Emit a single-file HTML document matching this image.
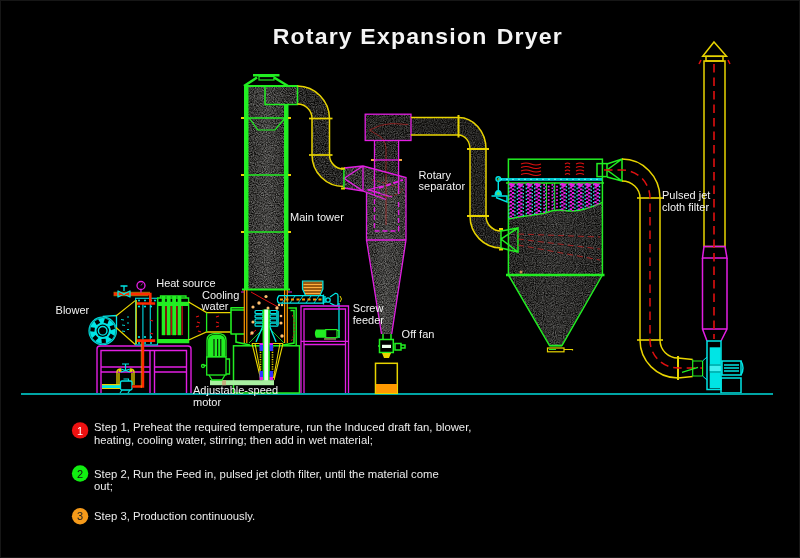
<!DOCTYPE html>
<html><head><meta charset="utf-8">
<style>
html,body{margin:0;padding:0;background:#000;}
body{width:800px;height:558px;overflow:hidden;position:relative;}
svg{position:absolute;left:0;top:0;will-change:transform;}
text{font-family:"Liberation Sans",sans-serif;}
</style></head><body>
<svg width="800" height="558" viewBox="0 0 800 558">
<defs>
<filter id="tex" x="0" y="0" width="800" height="558" filterUnits="userSpaceOnUse" color-interpolation-filters="sRGB">
<feTurbulence type="fractalNoise" baseFrequency="0.9" numOctaves="2" seed="7" result="n"/>
<feColorMatrix in="n" type="matrix" values="0.75 0 0 0 -0.175  0.75 0 0 0 -0.178  0.75 0 0 0 -0.185  0 0 0 0 1" result="g"/>
<feComposite in="g" in2="SourceAlpha" operator="in"/>
</filter>
<filter id="texd" x="0" y="0" width="800" height="558" filterUnits="userSpaceOnUse" color-interpolation-filters="sRGB">
<feTurbulence type="fractalNoise" baseFrequency="0.9" numOctaves="2" seed="11" result="n"/>
<feColorMatrix in="n" type="matrix" values="0.6 0 0 0 -0.148  0.6 0 0 0 -0.15  0.6 0 0 0 -0.156  0 0 0 0 1" result="g"/>
<feComposite in="g" in2="SourceAlpha" operator="in"/>
</filter>
<filter id="texd2" x="0" y="0" width="800" height="558" filterUnits="userSpaceOnUse" color-interpolation-filters="sRGB">
<feTurbulence type="fractalNoise" baseFrequency="0.9" numOctaves="2" seed="13" result="n"/>
<feColorMatrix in="n" type="matrix" values="0.5 0 0 0 -0.115  0.5 0 0 0 -0.118  0.5 0 0 0 -0.125  0 0 0 0 1" result="g"/>
<feComposite in="g" in2="SourceAlpha" operator="in"/>
</filter>
<linearGradient id="streak" x1="0" y1="0" x2="1" y2="0">
<stop offset="0" stop-color="#fff" stop-opacity="0"/><stop offset="0.5" stop-color="#fff" stop-opacity="0.09"/><stop offset="1" stop-color="#fff" stop-opacity="0"/>
</linearGradient>
</defs>
<rect width="800" height="558" fill="#000"/>
<rect x="0.5" y="0.5" width="799" height="557" fill="none" stroke="#161616" stroke-width="1"/>

<!-- ===== textured fills ===== -->
<g filter="url(#tex)" fill="#fff">
 <!-- tower -->
 <rect x="248" y="86" width="37" height="204"/>
 <rect x="265" y="86" width="33" height="18"/>
 <!-- cyclone -->
 <path d="M344,168 L363,166 L406,177.5 L406,240 L366.5,240 L366.5,192 L344,188 Z"/>
 <path d="M366.5,240 L406,240 L391.7,334 L381.5,334 Z"/>
 </g>
<g filter="url(#texd)" fill="#fff">
 <rect x="365" y="114.2" width="46" height="26.3"/>
 <rect x="374" y="140" width="25" height="40"/>
 <!-- duct 1 -->
 <path d="M297,86 A32.5,32.5 0 0 1 329.5,118.5 L329.5,155 A14,14 0 0 0 343.5,169 L343.5,186.5 A31.5,31.5 0 0 1 312,155 L312,118.5 A14.5,14.5 0 0 0 297.5,104 Z"/>

 <path d="M508.4,219 C520,216 535,215 545,213 C552,210 557,209 565,210.4 C572,211.5 578,211 585,209 C592,207 597,205 602.4,202.4 L602.4,275 L562,345.6 L549.5,345.6 L508.4,275 Z"/>
</g>

<g fill="url(#streak)">
 <rect x="248" y="86" width="37" height="204"/>
 <path d="M366.5,240 L406,240 L391.7,334 L381.5,334 Z"/>
 <rect x="366.5" y="177" width="39.5" height="63"/>
 <path d="M508.4,219 C520,216 535,215 545,213 C552,210 557,209 565,210.4 C572,211.5 578,211 585,209 C592,207 597,205 602.4,202.4 L602.4,275 L562,345.6 L549.5,345.6 L508.4,275 Z" opacity="0.6"/>
</g>
<g filter="url(#texd2)" fill="#fff">
 <!-- duct 2 -->
 <path d="M411,117.4 L458.5,117.4 A27.5,31.6 0 0 1 486,149 L486,216 A15,15 0 0 0 501,231 L501,248 A31,32 0 0 1 470,216 L470,149 A11.6,14 0 0 0 458.5,135 L411,135 Z"/>
</g>
<!-- ===== main tower (green) ===== -->
<g stroke="#22ee22" fill="none" stroke-width="1.5">
 <rect x="244" y="86" width="4.5" height="204" fill="#22ee22" stroke="none"/>
 <rect x="284" y="104" width="4.5" height="186" fill="#22ee22" stroke="none"/>
 <line x1="244" y1="86" x2="298" y2="86" stroke-width="2"/>
 <rect x="265" y="86" width="32.5" height="18.5"/>
 <path d="M244,86 L257,77.5 M288,86 L274,77.5" stroke-width="2.5"/>
 <rect x="253" y="74" width="26.5" height="2.5" fill="#22ee22" stroke="none"/>
 <rect x="259" y="76.5" width="15" height="3.5" stroke-width="1.2"/>
 <line x1="242" y1="118" x2="290" y2="118"/>
 <path d="M249,118 L258,130 L275,130 L285,118" stroke-width="1.2"/>
 <line x1="242" y1="175" x2="290" y2="175"/>
 <line x1="242" y1="232" x2="290" y2="232"/>
 <line x1="242" y1="289.5" x2="290" y2="289.5" stroke-width="2"/>
</g>
<g fill="#e8d400"><rect x="241" y="117" width="3" height="2"/><rect x="288" y="117" width="3" height="2"/>
<rect x="241" y="174" width="3" height="2"/><rect x="288" y="174" width="3" height="2"/>
<rect x="241" y="231" width="3" height="2"/><rect x="288" y="231" width="3" height="2"/></g>

<!-- ===== duct 1 (yellow) ===== -->
<g stroke="#e8d400" fill="none" stroke-width="1.5">
 <path d="M297.5,86 A32.5,32.5 0 0 1 329.5,118.5 L329.5,155 A14,14 0 0 0 343.5,169"/>
 <path d="M297.5,104 A14.5,14.5 0 0 1 312,118.5 L312,155 A31.5,31.5 0 0 0 343.5,186.5"/>
 <line x1="309" y1="118.5" x2="332.5" y2="118.5" stroke-width="1.7"/>
 <line x1="309" y1="155" x2="332.5" y2="155" stroke-width="1.7"/>
</g>

<!-- ===== cyclone (magenta) ===== -->
<g stroke="#c02020" fill="none" stroke-width="0.8" opacity="0.8">
 <path d="M408,124.5 L392,123.5 Q380,124 369.5,130 L381,137 Q386,142 386,150 V225" /><path d="M372,180 Q395,185 403,190 Q396,198 378,196" stroke-dasharray="3,2"/>
</g>
<g stroke="#e21ee2" fill="none" stroke-width="1.3">
 <rect x="365.2" y="114.2" width="45.8" height="26.3" stroke-width="1.3"/>
 <line x1="374.5" y1="140" x2="374.5" y2="196"/>
 <line x1="398.6" y1="140" x2="398.6" y2="194"/>
 <line x1="372" y1="160" x2="401" y2="160"/>
 <path d="M344,168 L363,166 L406,177.5 L406,240 M363,166 L344,178.4 L363,191 L344,188 M363,166 L363,191 L386,199.5 M366.5,192 L366.5,240 L406,240"/>
 <path d="M379,188 L403,180" stroke-dasharray="5,2.5" stroke-width="2"/>
 <path d="M382,186 L368,190 L380,193 M378,193 L392,197"/>
 <path d="M374.5,199 L374.5,231 L398.6,231 L398.6,199" stroke-dasharray="5,3"/>
 <path d="M366.5,240 L381.5,334 M406,240 L391.7,334"/>
</g>
<g fill="#f0a040"><rect x="371" y="159" width="3" height="2"/><rect x="399" y="159" width="3" height="2"/></g>
<line x1="343.9" y1="168" x2="343.9" y2="188.7" stroke="#22ee22" stroke-width="1.5"/>
<g fill="#e8d400"><rect x="341" y="167.5" width="4" height="2"/><rect x="341" y="187.5" width="4" height="2"/></g>

<!-- ===== duct 2 (yellow) ===== -->
<g stroke="#e8d400" fill="none" stroke-width="1.5">
 <path d="M411,117.4 L458.5,117.4 A27.5,31.6 0 0 1 486,149 L486,216 A15,15 0 0 0 501,231"/>
 <path d="M411,135 L458.5,135 A11.6,14 0 0 1 470,149 L470,216 A31,32 0 0 0 501,248"/>
 <line x1="458.5" y1="115" x2="458.5" y2="137.5" stroke-width="2"/>
 <line x1="467" y1="149" x2="489" y2="149" stroke-width="2"/>
 <line x1="467" y1="216" x2="489" y2="216" stroke-width="2"/>
</g>

<!-- ===== filter (green) ===== -->
<g stroke="#22ee22" fill="none" stroke-width="1.5">
 <rect x="508.4" y="159.2" width="94" height="116"/>
 <line x1="506" y1="183" x2="604" y2="183"/>
 <line x1="506" y1="275" x2="604.5" y2="275" stroke-width="2.5"/>
 <path d="M508.4,275 L549.5,345.6 L562,345.6 L602.4,275"/>
 <path d="M501,229 V250 M501,231 L518,228 L518,252 L501,248 M518,228 L501,239 L518,252"/>
 <path d="M508.4,219 C520,216 535,215 545,213 C552,210 557,209 565,210.4 C572,211.5 578,211 585,209 C592,207 597,205 602.4,202.4"/>
 <rect x="597" y="163.6" width="10" height="13"/>
 <path d="M607,164 L622,159 L622,181 L607,177 M622,159 L607,170 L622,181"/>
</g>
<rect x="498" y="178" width="104" height="2.8" fill="#00c8d0"/><line x1="500" y1="179.4" x2="602" y2="179.4" stroke="#60f0f0" stroke-width="1.2" stroke-dasharray="2,4"/>
<!-- bags -->
<clipPath id="bagclip"><path d="M508.4,183 H602.4 V202.4 C597,205 592,207 585,209 C578,211 572,211.5 565,210.4 C557,209 552,210 545,213 C535,215 520,216 508.4,219 Z"/></clipPath>
<g clip-path="url(#bagclip)">
<path d="M510.79999999999995,183 V222" stroke="#e21ee2" stroke-width="2.4" stroke-dasharray="1.9,1.7"/><path d="M513.0,184.8 V222" stroke="#e21ee2" stroke-width="2.4" stroke-dasharray="1.9,1.7"/><path d="M508.9,184 V222 M514.9,185.8 V222" stroke="#30d8e0" stroke-width="1.4" stroke-dasharray="1.6,2"/>
<path d="M507.9,183.5 H515.9 L511.9,187.5 Z" fill="#e21ee2"/><path d="M519.1999999999999,183 V222" stroke="#e21ee2" stroke-width="2.4" stroke-dasharray="1.9,1.7"/><path d="M521.4,184.8 V222" stroke="#e21ee2" stroke-width="2.4" stroke-dasharray="1.9,1.7"/><path d="M517.3,184 V222 M523.3,185.8 V222" stroke="#30d8e0" stroke-width="1.4" stroke-dasharray="1.6,2"/>
<path d="M516.3,183.5 H524.3 L520.3,187.5 Z" fill="#e21ee2"/><path d="M528.1999999999999,183 V222" stroke="#e21ee2" stroke-width="2.4" stroke-dasharray="1.9,1.7"/><path d="M530.4,184.8 V222" stroke="#e21ee2" stroke-width="2.4" stroke-dasharray="1.9,1.7"/><path d="M526.3,184 V222 M532.3,185.8 V222" stroke="#30d8e0" stroke-width="1.4" stroke-dasharray="1.6,2"/>
<path d="M525.3,183.5 H533.3 L529.3,187.5 Z" fill="#e21ee2"/><path d="M536.6,183 V222" stroke="#e21ee2" stroke-width="2.4" stroke-dasharray="1.9,1.7"/><path d="M538.8000000000001,184.8 V222" stroke="#e21ee2" stroke-width="2.4" stroke-dasharray="1.9,1.7"/><path d="M534.7,184 V222 M540.7,185.8 V222" stroke="#30d8e0" stroke-width="1.4" stroke-dasharray="1.6,2"/>
<path d="M533.7,183.5 H541.7 L537.7,187.5 Z" fill="#e21ee2"/><path d="M562.3,183 V222" stroke="#e21ee2" stroke-width="2.4" stroke-dasharray="1.9,1.7"/><path d="M564.5,184.8 V222" stroke="#e21ee2" stroke-width="2.4" stroke-dasharray="1.9,1.7"/><path d="M560.4,184 V222 M566.4,185.8 V222" stroke="#30d8e0" stroke-width="1.4" stroke-dasharray="1.6,2"/>
<path d="M559.4,183.5 H567.4 L563.4,187.5 Z" fill="#e21ee2"/><path d="M570.8,183 V222" stroke="#e21ee2" stroke-width="2.4" stroke-dasharray="1.9,1.7"/><path d="M573.0,184.8 V222" stroke="#e21ee2" stroke-width="2.4" stroke-dasharray="1.9,1.7"/><path d="M568.9,184 V222 M574.9,185.8 V222" stroke="#30d8e0" stroke-width="1.4" stroke-dasharray="1.6,2"/>
<path d="M567.9,183.5 H575.9 L571.9,187.5 Z" fill="#e21ee2"/><path d="M579.0,183 V222" stroke="#e21ee2" stroke-width="2.4" stroke-dasharray="1.9,1.7"/><path d="M581.2,184.8 V222" stroke="#e21ee2" stroke-width="2.4" stroke-dasharray="1.9,1.7"/><path d="M577.1,184 V222 M583.1,185.8 V222" stroke="#30d8e0" stroke-width="1.4" stroke-dasharray="1.6,2"/>
<path d="M576.1,183.5 H584.1 L580.1,187.5 Z" fill="#e21ee2"/><path d="M587.1,183 V222" stroke="#e21ee2" stroke-width="2.4" stroke-dasharray="1.9,1.7"/><path d="M589.3000000000001,184.8 V222" stroke="#e21ee2" stroke-width="2.4" stroke-dasharray="1.9,1.7"/><path d="M585.2,184 V222 M591.2,185.8 V222" stroke="#30d8e0" stroke-width="1.4" stroke-dasharray="1.6,2"/>
<path d="M584.2,183.5 H592.2 L588.2,187.5 Z" fill="#e21ee2"/><path d="M595.5,183 V222" stroke="#e21ee2" stroke-width="2.4" stroke-dasharray="1.9,1.7"/><path d="M597.7,184.8 V222" stroke="#e21ee2" stroke-width="2.4" stroke-dasharray="1.9,1.7"/><path d="M593.6,184 V222 M599.6,185.8 V222" stroke="#30d8e0" stroke-width="1.4" stroke-dasharray="1.6,2"/>
<path d="M592.6,183.5 H600.6 L596.6,187.5 Z" fill="#e21ee2"/><path d="M546.4,178 V222" stroke="#40e040" stroke-width="1"/><path d="M544.1,184 V222 M548.6999999999999,185.7 V222" stroke="#e21ee2" stroke-width="1.8" stroke-dasharray="1.7,1.7"/><path d="M545.4,186 V222" stroke="#30d8e0" stroke-width="0.9" stroke-dasharray="1.5,2"/>
<path d="M554.7,178 V222" stroke="#40e040" stroke-width="1"/><path d="M552.4000000000001,184 V222 M557.0,185.7 V222" stroke="#e21ee2" stroke-width="1.8" stroke-dasharray="1.7,1.7"/><path d="M553.7,186 V222" stroke="#30d8e0" stroke-width="0.9" stroke-dasharray="1.5,2"/>
</g>
<!-- red squiggles -->
<g stroke="#e01010" fill="none" stroke-width="1.2">
 <path d="M521,164 q5,-2 10,0 t10,0 M521,167.5 q5,-2 10,0 t10,0 M521,171 q5,-2 10,0 t10,0 M521,174.5 q5,-2 10,0 t10,0"/>
 <path d="M565,164 q2.5,-2 5,0 M565,167.5 q2.5,-2 5,0 M565,171 q2.5,-2 5,0 M565,174.5 q2.5,-2 5,0 M576,164 q4,-2 8,0 M576,167.5 q4,-2 8,0 M576,171 q4,-2 8,0 M576,174.5 q4,-2 8,0"/>
</g>
<g stroke="#b02020" fill="none" stroke-width="0.9" stroke-dasharray="6,4">
 <path d="M518,234 L600,237 M518,239 L600,249 M518,245 L600,260"/>
</g>
<circle cx="521" cy="272" r="1.5" fill="#d09050"/>
<g fill="#e8d400"><rect x="499" y="228" width="4" height="2"/><rect x="499" y="248.5" width="4" height="2"/></g>
<!-- filter valve -->
<g stroke="#e8d400" fill="none" stroke-width="1.2"><rect x="547.5" y="348" width="16.5" height="3.8"/><path d="M564,349.5 H572.5 V350.5"/></g><path d="M549.5,346 H562 M549,349.5 H556" stroke="#22ee22" stroke-width="1.2"/>
<!-- filter left bracket -->
<g stroke="#00e5e5" fill="none" stroke-width="1.4"><circle cx="498.3" cy="179" r="2.3"/><path d="M498.3,181 V191 M491.5,196 H507 V202 L496,197.5"/></g>
<path d="M494.5,195.5 Q494.5,190 498.3,190 Q502,190 502,195.5 Z" fill="#00e5e5"/>
<circle cx="498.3" cy="193.5" r="1.5" fill="#60e060"/>
<circle cx="498.3" cy="179.3" r="1" fill="#60c040"/>

<!-- ===== duct 3 (yellow) ===== -->
<g stroke="#e8d400" fill="none" stroke-width="1.5">
 <path d="M622,159 A38,39 0 0 1 660,198 L660,340 A18,18 0 0 0 678,358 L692.7,359.5"/>
 <path d="M622,181 A18,17 0 0 1 640,198 L640,340 A38,38 0 0 0 678,378 L692.7,376.5"/>
 <line x1="637" y1="198" x2="663" y2="198" stroke-width="1.6"/>
 <line x1="637" y1="340" x2="663" y2="340" stroke-width="1.6"/>
 <line x1="678" y1="356" x2="678" y2="380" stroke-width="2"/>
</g>
<g stroke="#e01010" fill="none" stroke-width="1.5" stroke-dasharray="8.5,5">
 <path d="M604,170 L622,170 A28,28 0 0 1 650,198 L650,340 A28,28 0 0 0 678,368 L703,368"/>
</g>
<g stroke="#22ee22" fill="none" stroke-width="1.2">
 <path d="M692.7,359.5 V376.5 M702.6,361 V376 M692.7,361 H702.6 M692.7,376 H702.6 M682,372.4 L698,367.4"/>
</g>

<!-- ===== chimney ===== -->
<g stroke="#e8d400" fill="none" stroke-width="1.5">
 <path d="M714,42 L726.5,56.3 L702.7,56.3 Z"/>
 <rect x="706" y="56.3" width="17" height="4.7"/>
 <rect x="704" y="61" width="21" height="185.5"/>
</g>
<g stroke="#e21ee2" fill="none" stroke-width="1.5">
 <path d="M704,246.5 L725,246.5 L727,258 L702.5,258 Z"/>
 <path d="M702.5,258 L702.5,329 L707,341 M727,258 L727,329 L721,341 M702.5,329 L727,329"/>
</g>
<line x1="714" y1="64" x2="714" y2="339" stroke="#e01010" stroke-width="1.6" stroke-dasharray="8.5,5"/>
<g stroke="#e01010" stroke-width="1.5"><path d="M699,64 L701,60 M730,64 L728,60"/></g>
<!-- fan -->
<g stroke="#00e5e5" fill="none" stroke-width="1.5">
 <rect x="707" y="341" width="14" height="48.5"/><path d="M702.6,361 L707,357 M702.6,376 L707,380" stroke-width="1"/>
 <rect x="722" y="361" width="19" height="14"/>
 <path d="M741,361 q4,7 0,14"/>
 <rect x="721" y="378" width="20" height="15"/>
</g>
<rect x="709.7" y="347.3" width="11" height="41" fill="#00e5e5"/><path d="M709.7,365 H720.5 M709.7,372 H720.5" stroke="#008c8c" stroke-width="1.2"/><rect x="709.7" y="366" width="11" height="5" fill="#40f0f0"/>
<g stroke="#00e5e5" stroke-width="1.5"><path d="M724,365 H739 M724,368 H739 M724,371 H739"/></g>

<!-- ===== ground ===== -->
<rect x="21" y="393" width="752" height="2" fill="#00a5a5"/>

<!-- ===== left equipment ===== -->
<!-- stand -->
<g stroke="#e21ee2" fill="none" stroke-width="1.4">
 <path d="M97,393 V349 Q97,346 100,346 H188 Q191,346 191,349 V393"/>
 <path d="M101,393 V350.5 H186.5 V393 M150,393 V350.5 M154.5,393 V350.5 M101,367 H150 M101,372 H150 M154.5,367 H186.5 M154.5,372 H186.5"/>
</g>
<!-- bottom pump/valve -->
<g stroke="#e8d400" fill="none" stroke-width="1.3">
 <path d="M117,385 V372 Q117,369 121,369 M134,385 V372 Q134,369 130,369 M119,385 V373 M132,385 V373"/>
</g>
<g fill="#e8d400"><circle cx="120" cy="370.5" r="1.6"/><circle cx="131" cy="370.5" r="1.6"/></g>
<g stroke="#00e5e5" fill="none" stroke-width="1.2">
 <path d="M125.5,364 V371 M122,364 H129 M121,369 L130,372 M121,372 L130,369"/>
</g>
<rect x="102" y="385" width="19" height="3" fill="#00e5e5"/>
<rect x="102" y="384" width="19" height="1.2" fill="#e8d400"/>
<rect x="102" y="388" width="19" height="1" fill="#e8d400"/>
<rect x="120.5" y="381" width="11.5" height="9" rx="1.5" fill="#000" stroke="#00e5e5" stroke-width="1.3"/>
<path d="M122,390 L120,393 M130,390 L128,393 M123.5,379 H128.5 V381" stroke="#00e5e5" stroke-width="1.1" fill="none"/>
<!-- blower -->
<path d="M102.7,316.3 L116.5,315.5 L116.5,328" stroke="#00e5e5" fill="none" stroke-width="1.3"/>
<circle cx="102.7" cy="330.8" r="14.3" fill="#00e5e5"/>
<circle cx="102.7" cy="330.8" r="13.2" fill="none" stroke="#007878" stroke-width="0.7"/>
<rect x="104.09" y="319.12" width="4.2" height="4.2" fill="#000" transform="rotate(-70.0 106.19 321.22)"/><rect x="110.27" y="325.45" width="4.2" height="4.2" fill="#000" transform="rotate(-18.6 112.37 327.55)"/><rect x="109.17" y="334.23" width="4.2" height="4.2" fill="#000" transform="rotate(32.9 111.27 336.33)"/><rect x="101.62" y="338.85" width="4.2" height="4.2" fill="#000" transform="rotate(84.3 103.72 340.95)"/><rect x="93.30" y="335.82" width="4.2" height="4.2" fill="#000" transform="rotate(135.7 95.40 337.92)"/><rect x="90.48" y="327.43" width="4.2" height="4.2" fill="#000" transform="rotate(187.1 92.58 329.53)"/><rect x="95.28" y="320.00" width="4.2" height="4.2" fill="#000" transform="rotate(238.6 97.38 322.10)"/>
<circle cx="102.7" cy="330.8" r="6.2" fill="#000"/>
<circle cx="102.7" cy="330.8" r="4.3" fill="none" stroke="#00e5e5" stroke-width="1.4"/>
<g stroke="#e8d400" stroke-width="1.2" fill="none"><path d="M116,316 L135.2,300.6 M116,327.5 L135.2,344.5"/></g>
<g stroke="#00d0d0" stroke-width="1" fill="none"><path d="M121,319.5 l3,0.5 M127,317 l2,0 M122,325 l3,0.5 M127,323 l2,0 M122,331 l3,0.5 M127,329.5 l2,0"/></g>
<!-- heater -->
<g stroke="#00c8d0" fill="none" stroke-width="1.2">
 <rect x="135.6" y="298.3" width="21.9" height="46.6"/>
 <path d="M142.9,304 V340 M150.3,304 V340"/>
</g>
<path d="M136.2,300 V344" stroke="#e8d400" stroke-width="1.3"/>
<g fill="#00e5e5">
 <circle cx="139" cy="300.5" r="1"/><circle cx="145" cy="300.5" r="1"/><circle cx="151" cy="300.5" r="1"/><circle cx="155" cy="300.5" r="1"/>
 <circle cx="139" cy="306.5" r="1.1"/><circle cx="145" cy="306.5" r="1.1"/><circle cx="151" cy="306.5" r="1.1"/>
 <circle cx="139" cy="337" r="1.1"/><circle cx="145" cy="337" r="1.1"/><circle cx="151" cy="337" r="1.1"/>
 <circle cx="139" cy="343" r="1"/><circle cx="145" cy="343" r="1"/><circle cx="151" cy="343" r="1"/>
</g>
<g stroke="#ff2a00" fill="none" stroke-width="2.6">
 <path d="M113.6,294 H150.3 V303"/>
 <path d="M137,303.5 H155.2 M137,340.6 H155.2 M142.9,340.6 V386.5 H132"/>
</g>
<g stroke="#ffa000" stroke-width="0.7" fill="none"><path d="M113.6,292.3 H150 M113.6,295.7 H148.5 M141.3,342 V388"/></g>
<circle cx="141" cy="285.5" r="4" stroke="#e21ee2" fill="none" stroke-width="1.3"/>
<path d="M141,285.5 l1.5,-2" stroke="#e21ee2" stroke-width="0.8"/>
<line x1="141" y1="289.5" x2="141" y2="292.5" stroke="#e21ee2" stroke-width="1.2"/>
<g stroke="#00e5e5" stroke-width="1.3" fill="none"><path d="M124,286 V291 M120.5,286 H127.5 M118,290.5 V297.5 M130,290.5 V297.5 M118,291 L130,297 M118,297 L130,291"/></g>
<!-- heat exchanger -->
<g stroke="#22ee22" fill="none" stroke-width="1.3">
 <path d="M157.7,298 V342.7 H188.6 V298 Z"/>
 <path d="M160.5,298 V296 H186 V298"/>
</g>
<rect x="158" y="301.8" width="30.5" height="4.2" fill="#22ee22"/>
<rect x="158" y="339" width="30.5" height="3" fill="#22ee22"/>
<g fill="#22ee22"><rect x="161.7" y="296" width="3.5" height="39.2"/><rect x="166.8" y="296" width="3.8" height="39.2"/><rect x="172.2" y="296" width="3.8" height="39.2"/><rect x="177.6" y="296" width="3.7" height="39.2"/></g>
<g fill="#b01010"><rect x="165.3" y="306" width="1.4" height="29"/><rect x="170.7" y="306" width="1.4" height="29"/><rect x="176.1" y="306" width="1.4" height="29"/><rect x="181.5" y="306" width="1.4" height="29"/></g>
<!-- cone + pipe to tower -->
<g stroke="#e8d400" fill="none" stroke-width="1.3">
 <path d="M188.6,302 L206.6,312.6 H231 M188.6,340 L206.6,332 H231"/>
</g>
<line x1="206.6" y1="312.6" x2="206.6" y2="332" stroke="#22ee22" stroke-width="1.3"/>
<g stroke="#e01010" stroke-width="1.2"><path d="M196,317 l3,-1 M197,322 l3,1 M196,327 l3,-1 M198,331 l3,1 M216,317 l3,-1 M216,322 l3,1 M216,327 l3,-1 M150,320 l3,1 M150,333 l3,1"/></g>
<g stroke="#22ee22" fill="none" stroke-width="1.6">
 <path d="M230.5,307.7 H244 M230.5,310 H244 M231,307.7 V334 M230.5,334 H244 M236,334 V342 L250,345"/>
</g>
<g stroke="#e21ee2" stroke-width="1.2"><path d="M241,292 H244 M288,292 H292"/></g>

<!-- tower bottom chamber -->
<g stroke="#ff9900" fill="none" stroke-width="1.2">
 <path d="M244.3,290 V343 M246.8,290 V343 M284.6,290 V343 M287.3,290 V343"/>
</g>
<g stroke="#22ee22" fill="none" stroke-width="1.5">
 <path d="M288.5,308 H296.2 V345 M290.5,310.5 H294 V343 L283,345"/>
 <rect x="233.5" y="345.8" width="66" height="47.2"/>
 <path d="M249,343 L263,329 M284,343 L270,329" stroke-width="0.8"/>
</g>
<path d="M292.5,315 Q297,330 291,342" stroke="#c01010" stroke-width="1" stroke-dasharray="2,1.5" fill="none"/>
<path d="M251,292 Q265,300 278,307" stroke="#e01010" stroke-width="1" fill="none"/>
<path d="M256,330 L250,335" stroke="#e01010" stroke-width="1" fill="none"/>
<g fill="#ffc070">
 <circle cx="266" cy="296.5" r="1.6"/><circle cx="259" cy="303" r="1.7"/><circle cx="253" cy="307" r="1.6"/><circle cx="268" cy="308" r="1.5"/><circle cx="253" cy="322" r="1.6"/><circle cx="252" cy="333" r="1.7"/><circle cx="277" cy="308" r="1.7"/><circle cx="281" cy="323" r="1.6"/><circle cx="282" cy="336" r="1.7"/><circle cx="281" cy="316" r="1.3"/><circle cx="279" cy="305" r="1.2"/><circle cx="282" cy="305" r="1.2"/>
</g>
<!-- stirrer -->
<g stroke="#00e5e5" fill="none" stroke-width="1.2">
 <rect x="255" y="310.5" width="8" height="3" rx="1"/><rect x="255" y="314.8" width="8" height="3" rx="1"/><rect x="255" y="319" width="8" height="3" rx="1"/><rect x="255" y="323.2" width="8" height="3" rx="1"/>
 <rect x="270" y="310.5" width="8" height="3" rx="1"/><rect x="270" y="314.8" width="8" height="3" rx="1"/><rect x="270" y="319" width="8" height="3" rx="1"/><rect x="270" y="323.2" width="8" height="3" rx="1"/>
 <path d="M263,326 L256,342 M269.5,326 L276,342" stroke-width="1.4"/>
</g>
<rect x="276" y="311" width="3" height="14" fill="#00b0b0"/>
<g stroke="#e8d400" fill="none" stroke-width="1.1"><path d="M252,343.5 L261,380 M283,343.5 L274,380 M252,343.5 H283 M255,343.5 L261.5,378 M280,343.5 L273.5,378"/></g>
<path d="M260.5,347 V378 M272.5,347 V378" stroke="#e8d400" stroke-width="1.6" stroke-dasharray="1.2,1.2"/>
<rect x="262.6" y="309.5" width="7.2" height="75" fill="#22ee22"/>
<rect x="264.3" y="309.5" width="3.8" height="75" fill="#f0fff0"/>
<g fill="#3030ff"><rect x="259.5" y="345" width="3.5" height="6"/><rect x="269.5" y="345" width="3.5" height="6"/><rect x="259.5" y="371" width="3.5" height="6"/><rect x="269.5" y="371" width="3.5" height="6"/></g>
<g fill="#e21ee2"><rect x="259.5" y="343" width="3.5" height="2"/><rect x="269.5" y="343" width="3.5" height="2"/><rect x="259.5" y="377" width="3.5" height="3"/><rect x="269.5" y="377" width="3.5" height="3"/></g>
<rect x="210" y="380.2" width="64" height="5" fill="#a8f0a0"/>
<rect x="222" y="380.2" width="4" height="5" fill="#c8b080"/>
<!-- motor -->
<g stroke="#22ee22" fill="none" stroke-width="1.3">
 <path d="M207,357 V340 Q207,333.4 216.5,333.4 Q226,333.4 226,340 V357"/>
 <rect x="206.7" y="357" width="19.3" height="18"/>
 <path d="M226,359 H229.5 V374 H226 M209,375 L212,380 H222 L225,375 M206.7,365.5 H203.5"/>
 <circle cx="203" cy="366" r="1.5"/>
</g>
<path d="M208,357 V340 Q208,334.5 216.5,334.5 Q225,334.5 225,340 V357 Z" fill="#22ee22"/>
<g stroke="#000" stroke-width="1"><path d="M214,339 V356 M217.7,339 V356 M220.8,339 V356"/></g>

<!-- screw feeder -->
<path d="M302.5,281 H322.9 V289 L320,295.5 H305.5 L302.5,289 Z" fill="#9a5a10" stroke="#00e5e5" stroke-width="1.2"/>
<g stroke="#ffb040" stroke-width="1" fill="none"><path d="M303.5,284.5 H322 M303.5,287.5 H322 M304,290.5 H321 M305,293.5 H320.5"/></g>
<g stroke="#00e5e5" fill="none" stroke-width="1.3">
 <path d="M279,295.7 H323.2 V303.2 H279 Q275.5,299.5 279,295.7 Z"/>
 <path d="M323.5,294.5 V304.5 M325,296 V303"/>
 <path d="M282,303 L287,296 M290,303 L295,296 M298,303 L303,296 M306,303 L311,296 M314,303 L319,296" stroke-width="0.9"/>
 <circle cx="328" cy="300" r="2.2"/>
 <path d="M330,297 L335,293.5 Q338,293 338,296 V304 Q338,306 335,305.5 L330,303"/>
 <path d="M339,303 V338"/>
</g>
<line x1="280" y1="299.5" x2="322" y2="299.5" stroke="#ff9900" stroke-width="2" stroke-dasharray="3,2.5"/>
<path d="M340,296 l1.5,3 l-1.5,3" stroke="#e8d400" stroke-width="1" fill="none"/>
<g stroke="#e21ee2" fill="none" stroke-width="1.3">
 <path d="M301,393 V306 H348.5 V393 M304,393 V309 H345.5 V393 M301,341.3 H348.5 M304,344.5 H345.5"/>
</g>
<path d="M316,329.6 H325.7 V337.7 H316 Q313.8,333.6 316,329.6 Z" fill="#22ee22"/>
<g stroke="#22ee22" fill="none" stroke-width="1.2"><rect x="325.7" y="329.6" width="11.3" height="8.1"/><path d="M337,330.5 H339 V337 H337"/></g>
<path d="M324,339 H336" stroke="#b8a070" stroke-width="1.2"/>

<!-- off fan + container -->
<g stroke="#22ee22" fill="none" stroke-width="1.5">
 <rect x="379.5" y="339.5" width="13.8" height="13"/>
 <path d="M383,334 V339 M391,334 V339"/>
 <rect x="395" y="343.5" width="6" height="6.5"/>
 <path d="M401,345 H405 V348 H401 M378,346 H379.5"/>
</g>
<rect x="382" y="344.8" width="9" height="3.2" fill="#eeffee"/>
<path d="M382,353 L391,353 L389,358 L384,358 Z" fill="#e8d400"/>
<rect x="375.5" y="363.3" width="21.8" height="30" fill="none" stroke="#e8d400" stroke-width="1.5"/>
<rect x="376" y="384" width="21" height="9" fill="#ff9900"/>

<!-- ===== labels ===== -->
<g fill="#f2f2f2" font-size="11">
 <text x="290" y="220.6">Main tower</text>
 <text x="418.6" y="179.3">Rotary</text>
 <text x="418.6" y="190.4">separator</text>
 <text x="662" y="199">Pulsed jet</text>
 <text x="662" y="211">cloth filter</text>
 <text x="156.2" y="287.4">Heat source</text>
 <text x="202" y="298.6">Cooling</text>
 <text x="201.6" y="310.1">water</text>
 <text x="55.6" y="314">Blower</text>
 <text x="352.8" y="312">Screw</text>
 <text x="352.8" y="324.2">feeder</text>
 <text x="401.6" y="337.8">Off fan</text>
 <text x="193" y="394">Adjustable-speed</text>
 <text x="193" y="406">motor</text>
</g>

<!-- ===== title ===== -->
<text transform="translate(272.8,44.2) scale(1.1,1.02)" fill="#f4f4f4" font-size="21" font-weight="bold" letter-spacing="1.04">Rotary Expansion <tspan dx="1.6">Dryer</tspan></text>

<!-- ===== steps ===== -->
<circle cx="80.1" cy="430.4" r="8.2" fill="#ee1111"/>
<text x="80.1" y="434.5" fill="#fff" font-size="11" text-anchor="middle">1</text>
<circle cx="80.1" cy="473.5" r="8.2" fill="#11ee11"/>
<text x="80.1" y="477.6" fill="#111" font-size="11" text-anchor="middle">2</text>
<circle cx="80.1" cy="516.2" r="8.2" fill="#f59a1a"/>
<text x="80.1" y="520.3" fill="#222" font-size="11" text-anchor="middle">3</text>
<g fill="#ececec" font-size="11.3">
 <text x="94" y="431">Step 1, Preheat the required temperature, run the Induced draft fan, blower,</text>
 <text x="94" y="443.5">heating, cooling water, stirring; then add in wet material;</text>
 <text x="94" y="477.6">Step 2, Run the Feed in, pulsed jet cloth filter, until the material come</text>
 <text x="94" y="490">out;</text>
 <text x="94" y="519.6">Step 3, Production continuously.</text>
</g>
</svg>
</body></html>
